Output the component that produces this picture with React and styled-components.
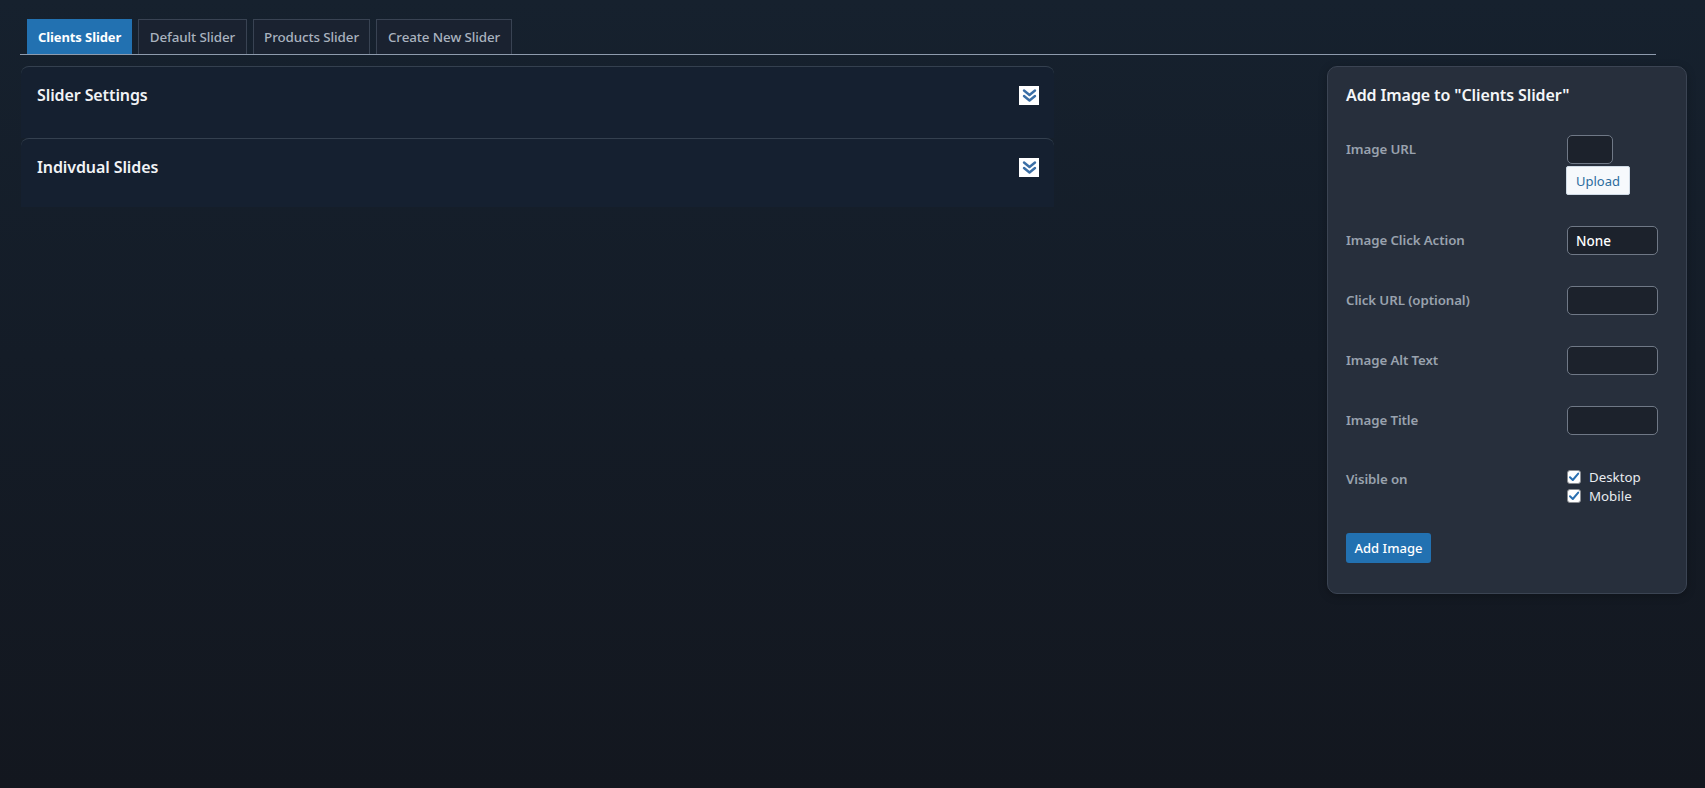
import React from "react";
import styled, { createGlobalStyle } from "styled-components";

const Global = createGlobalStyle`
  html, body { margin: 0; padding: 0; }
  body {
    min-height: 788px;
    background: linear-gradient(180deg, #16212e 0%, #141c27 45%, #13171f 100%);
    font-family: "Noto Sans", "Open Sans", sans-serif;
    color: #e6e9ee;
  }
  #root { min-height: 788px; }
`;

const Page = styled.div`
  padding: 19px 18px 0 20px;
  display: flex;
  flex-direction: column;
`;

const TabBar = styled.div`
  display: flex;
  gap: 6px;
  padding-left: 7px;
  width: 1636px;
  box-sizing: border-box;
  border-bottom: 1px solid #8e9bad;
`;

const Tab = styled.div`
  height: 35px;
  box-sizing: border-box;
  display: flex;
  align-items: center;
  padding: 0 ${(p) => (p.$active ? 10 : 10.5)}px;
  font-size: ${(p) => (p.$active ? 13 : 13.4)}px;
  font-weight: ${(p) => (p.$active ? 700 : 500)};
  color: ${(p) => (p.$active ? "#ffffff" : "#a9b2bf")};
  background: ${(p) => (p.$active ? "#2271b1" : "#1a2230")};
  border: 1px solid ${(p) => (p.$active ? "#2271b1" : "#394353")};
  border-bottom: none;
  letter-spacing: -0.1px;
`;

const Body = styled.div`
  display: flex;
  align-items: flex-start;
  margin-top: 11px;
`;

const Left = styled.div`
  width: 1033px;
  margin-left: 1px;
  display: flex;
  flex-direction: column;
`;

const Section = styled.div`
  height: ${(p) => p.$h}px;
  box-sizing: border-box;
  background: #152030;
  border-top: 1px solid #34404f;
  border-radius: 8px 8px 0 0;
  display: flex;
  align-items: flex-start;
  justify-content: space-between;
  padding: 17px 15px 0 16px;
`;

const SectionTitle = styled.div`
  font-size: 16px;
  font-weight: 600;
  line-height: 22px;
  color: #f1f3f6;
  letter-spacing: -0.1px;
`;

const Toggle = styled.div`
  width: 20px;
  height: 19px;
  background: #ffffff;
  display: flex;
  align-items: center;
  justify-content: center;
  margin-top: 2px;
`;

const Card = styled.div`
  margin-left: auto;
  width: 360px;
  box-sizing: border-box;
  background: #272f3c;
  border: 1px solid #3b4453;
  border-radius: 10px;
  padding: 17px 18px 30px 18px;
  box-shadow: 0 2px 8px rgba(0, 0, 0, 0.25);
`;

const CardTitle = styled.div`
  font-size: 16px;
  font-weight: 600;
  line-height: 22px;
  color: #f4f6f8;
  letter-spacing: -0.1px;
  margin-bottom: 29px;
`;

const Form = styled.div`
  display: grid;
  grid-template-columns: 221px 1fr;
  row-gap: 31px;
  align-items: start;
`;

const Label = styled.div`
  font-size: 13.3px;
  font-weight: 600;
  line-height: 18px;
  color: #99a2ae;
  padding-top: ${(p) => p.$pt ?? 5}px;
  letter-spacing: -0.1px;
`;

const Field = styled.div`
  display: flex;
  flex-direction: column;
  align-items: flex-start;
`;

const Input = styled.div`
  width: ${(p) => p.$w}px;
  height: 29px;
  box-sizing: border-box;
  background: #1c222c;
  border: 1px solid #6f7886;
  border-radius: 5px;
  display: flex;
  align-items: center;
  padding-left: 8px;
  font-size: 13.5px;
  font-weight: 500;
  color: #ffffff;
`;

const UploadBtn = styled.div`
  margin-top: 2px;
  margin-left: -1px;
  width: 64px;
  height: 29px;
  box-sizing: border-box;
  background: #f6f9fc;
  border: 1px solid #d0dbe6;
  border-radius: 2px;
  display: flex;
  align-items: center;
  justify-content: center;
  font-size: 13px;
  color: #2c6c9e;
`;

const Checks = styled.div`
  display: flex;
  flex-direction: column;
  padding-top: 1px;
`;

const CheckRow = styled.div`
  display: flex;
  align-items: center;
  gap: 8px;
  height: 19px;
  font-size: 13.3px;
  color: #e8ebef;
`;

const Box = styled.span`
  width: 14px;
  height: 14px;
  box-sizing: border-box;
  background: #ffffff;
  border: 1px solid #8c8f94;
  border-radius: 3px;
  display: flex;
  align-items: center;
  justify-content: center;
`;

const AddBtn = styled.div`
  margin-top: 28px;
  width: 85px;
  height: 30px;
  box-sizing: border-box;
  background: #2271b1;
  border-radius: 3px;
  display: flex;
  align-items: center;
  justify-content: center;
  font-size: 13px;
  font-weight: 500;
  color: #ffffff;
`;

const Chevrons = () => (
  <svg width="15" height="15" viewBox="0 0 15 15">
    <polyline points="2,2.5 7.5,7 13,2.5" fill="none" stroke="#3b6fa6" strokeWidth="2.4" strokeLinecap="round" strokeLinejoin="round" />
    <polyline points="2,8 7.5,12.5 13,8" fill="none" stroke="#3b6fa6" strokeWidth="2.4" strokeLinecap="round" strokeLinejoin="round" />
  </svg>
);

const Check = () => (
  <svg width="12" height="12" viewBox="0 0 12 12">
    <polyline points="2,6.2 4.8,9 10.2,2.6" fill="none" stroke="#2a6fb0" strokeWidth="2" strokeLinecap="round" strokeLinejoin="round" />
  </svg>
);

export default function App() {
  return (
    <>
      <Global />
      <Page>
        <TabBar>
          <Tab $active>Clients Slider</Tab>
          <Tab>Default Slider</Tab>
          <Tab>Products Slider</Tab>
          <Tab>Create New Slider</Tab>
        </TabBar>
        <Body>
          <Left>
            <Section $h={72}>
              <SectionTitle>Slider Settings</SectionTitle>
              <Toggle><Chevrons /></Toggle>
            </Section>
            <Section $h={69}>
              <SectionTitle>Indivdual Slides</SectionTitle>
              <Toggle><Chevrons /></Toggle>
            </Section>
          </Left>
          <Card>
            <CardTitle>Add Image to "Clients Slider"</CardTitle>
            <Form>
              <Label>Image URL</Label>
              <Field>
                <Input $w={46} />
                <UploadBtn>Upload</UploadBtn>
              </Field>
              <Label>Image Click Action</Label>
              <Field>
                <Input $w={91}>None</Input>
              </Field>
              <Label>Click URL (optional)</Label>
              <Field>
                <Input $w={91} />
              </Field>
              <Label>Image Alt Text</Label>
              <Field>
                <Input $w={91} />
              </Field>
              <Label>Image Title</Label>
              <Field>
                <Input $w={91} />
              </Field>
              <Label $pt={4}>Visible on</Label>
              <Checks>
                <CheckRow><Box><Check /></Box>Desktop</CheckRow>
                <CheckRow><Box><Check /></Box>Mobile</CheckRow>
              </Checks>
            </Form>
            <AddBtn>Add Image</AddBtn>
          </Card>
        </Body>
      </Page>
    </>
  );
}
